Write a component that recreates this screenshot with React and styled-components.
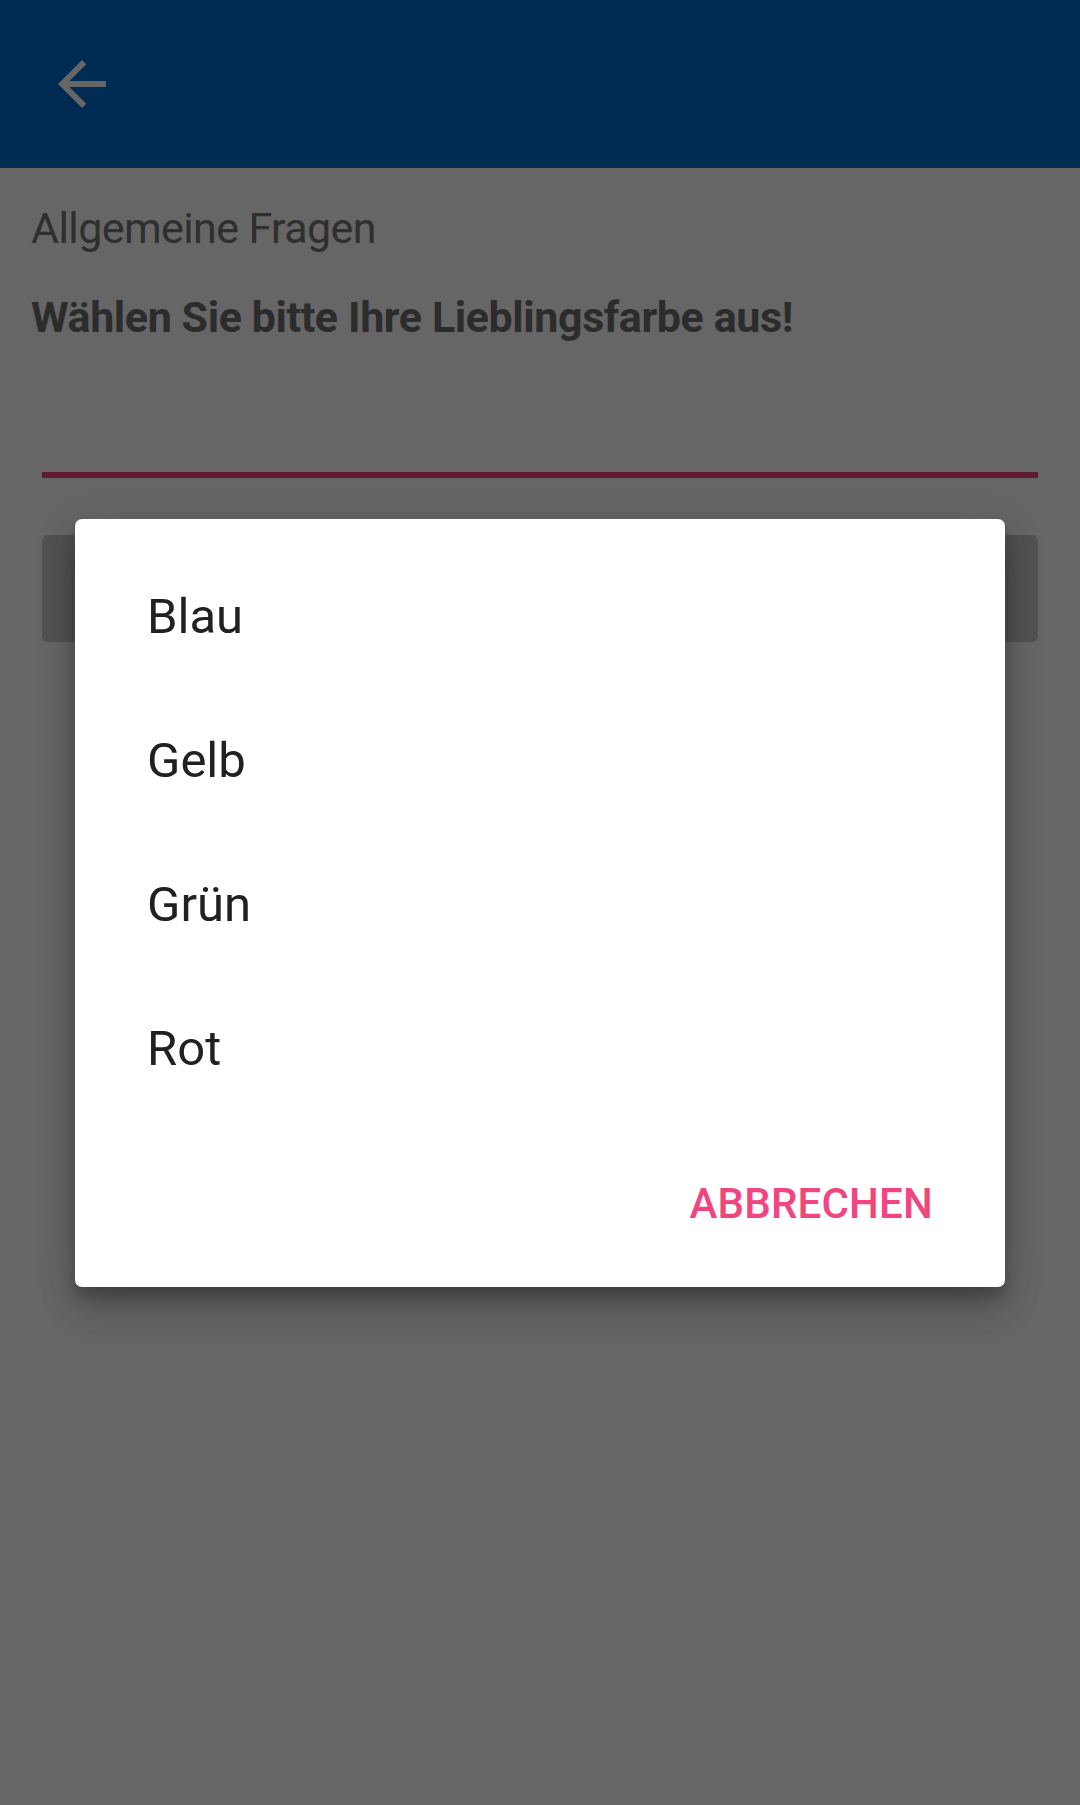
import React from "react";
import styled, { createGlobalStyle } from "styled-components";

const GlobalStyle = createGlobalStyle`
  html, body {
    margin: 0;
    padding: 0;
    background: #ffffff;
    font-family: Roboto, "Noto Sans", "Liberation Sans", sans-serif;
  }
`;

const Screen = styled.div`
  position: relative;
  width: 1080px;
  height: 1805px;
  overflow: hidden;
  background: #ffffff;
`;

const Toolbar = styled.header`
  height: 168px;
  background: #006bcd;
  display: flex;
  align-items: center;
  padding-left: 46px;
  box-sizing: border-box;
`;

const BackButton = styled.button`
  width: 72px;
  height: 72px;
  padding: 0;
  border: none;
  background: transparent;
  color: #ffffff;
  display: flex;
  align-items: center;
  justify-content: center;
`;

const Content = styled.main`
  padding: 30px 31px 0;
  display: flex;
  flex-direction: column;
`;

const Category = styled.div`
  font-size: 43px;
  line-height: 60px;
  letter-spacing: -0.6px;
  color: #757575;
`;

const Question = styled.div`
  margin-top: 29px;
  font-size: 43px;
  line-height: 60px;
  letter-spacing: -0.4px;
  font-weight: 700;
  color: #6e6e6e;
`;

const Field = styled.div`
  margin: 25px 11px 0;
  height: 100px;
  border-bottom: 6px solid #ee4580;
`;

const ChooseButton = styled.div`
  margin: 57px 11px 0;
  height: 107px;
  border-radius: 6px;
  background: #cccccc;
`;

const Scrim = styled.div`
  position: absolute;
  inset: 0;
  background: rgba(0, 0, 0, 0.6);
  display: flex;
  align-items: center;
  justify-content: center;
`;

const Dialog = styled.div`
  width: 930px;
  height: 768px;
  box-sizing: border-box;
  background: #ffffff;
  border-radius: 7px;
  padding-top: 26px;
  display: flex;
  flex-direction: column;
  box-shadow: 0 24px 38px rgba(0, 0, 0, 0.14), 0 9px 46px rgba(0, 0, 0, 0.12),
    0 11px 15px rgba(0, 0, 0, 0.2);
`;

const Option = styled.div`
  height: 144px;
  display: flex;
  align-items: center;
  padding-left: 72px;
  font-size: 49px;
  color: #212121;
`;

const Actions = styled.div`
  flex: 1;
  display: flex;
  align-items: center;
  justify-content: flex-end;
  padding-right: 50px;
`;

const TextButton = styled.button`
  border: none;
  background: transparent;
  padding: 0 22px;
  font-family: Roboto, "Noto Sans", "Liberation Sans", sans-serif;
  font-size: 42px;
  font-weight: 500;
  letter-spacing: 0.2px;
  color: #f0457f;
`;

const options = ["Blau", "Gelb", "Grün", "Rot"];

const App = () => {
  return (
    <>
      <GlobalStyle />
      <Screen>
        <Toolbar>
          <BackButton>
            <svg width="72" height="72" viewBox="0 0 24 24" fill="currentColor">
              <path d="M20 11H7.83l5.59-5.59L12 4l-8 8 8 8 1.41-1.41L7.83 13H20v-2z" />
            </svg>
          </BackButton>
        </Toolbar>
        <Content>
          <Category>Allgemeine Fragen</Category>
          <Question>Wählen Sie bitte Ihre Lieblingsfarbe aus!</Question>
          <Field />
          <ChooseButton />
        </Content>
        <Scrim>
          <Dialog>
            {options.map(item => (
              <Option key={item}>{item}</Option>
            ))}
            <Actions>
              <TextButton>ABBRECHEN</TextButton>
            </Actions>
          </Dialog>
        </Scrim>
      </Screen>
    </>
  );
};

export default App;
